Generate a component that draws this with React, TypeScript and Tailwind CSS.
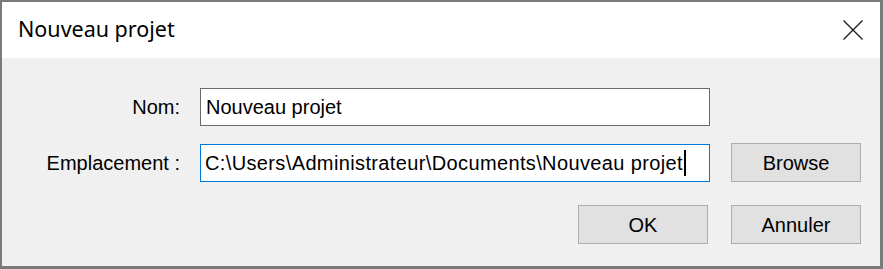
import React from 'react'

const sans = { fontFamily: '"Liberation Sans", Arial, sans-serif' }

const CloseIcon = () => (
  <svg width="20" height="20" viewBox="0 0 20 20" className="block">
    <path d="M0.5 0.5 L19.5 19.5 M19.5 0.5 L0.5 19.5" stroke="#1a1a1a" strokeWidth="1.3" fill="none" />
  </svg>
)

const WinButton = ({ label }: { label: string }) => (
  <div className="flex h-[39px] w-[130px] items-center justify-center border border-[#adadad] bg-[#e1e1e1] text-[20px] text-black">
    {label}
  </div>
)

export default function App() {
  return (
    <div className="h-[269px] w-[883px] bg-white">
      <div className="flex h-full w-full flex-col border-t-2 border-l-2 border-r-[3px] border-b-[3px] border-[#7a7a7a]">
        {/* title bar */}
        <div className="flex h-[56px] shrink-0 items-center justify-between bg-white pl-4 pr-[17px]">
          <span className="-mt-[2px] text-[21.5px] leading-none text-black" style={{ fontFamily: '"Noto Sans", "Open Sans", sans-serif' }}>
            Nouveau projet
          </span>
          <CloseIcon />
        </div>

        {/* body */}
        <div className="flex-1 bg-[#f0f0f0] pt-[30px]" style={sans}>
          <div className="grid grid-cols-[178px_510px_130px] items-center gap-x-[20px] gap-y-[17px]">
            <div className="text-right text-[20px] text-black">Nom:</div>
            <div className="flex h-[38px] items-center border border-[#6a6a6a] bg-white px-[5px] text-[20px] text-black">
              Nouveau projet
            </div>
            <div />

            <div className="text-right text-[20px] text-black">Emplacement :</div>
            <div className="flex h-[38px] items-center border border-[#0078d7] bg-white px-[4px] text-[20px] text-black">
              <span className="tracking-[0.37px]">C:\Users\Administrateur\Documents\Nouveau projet</span>
              <span className="ml-[1px] h-[26px] w-[2px] bg-black" />
            </div>
            <div className="pl-[1px]">
              <WinButton label="Browse" />
            </div>
          </div>

          <div className="mt-[23px] flex justify-end gap-[23px] pr-[19px]">
            <WinButton label="OK" />
            <WinButton label="Annuler" />
          </div>
        </div>
      </div>
    </div>
  )
}
